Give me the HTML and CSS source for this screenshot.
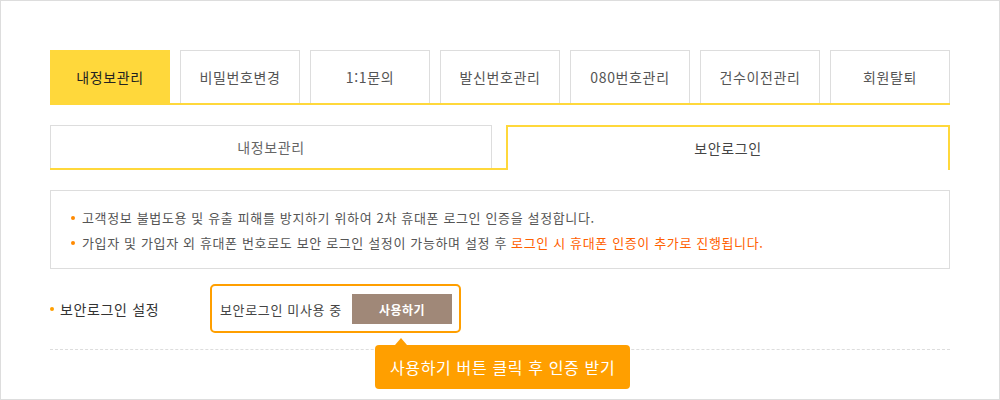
FILE: index.html
```html
<!DOCTYPE html>
<html lang="ko">

<head>
    <meta charset="UTF-8">
    <meta name="viewport" content="width=device-width, initial-scale=1.0">
    <title>보안로그인</title>
    <link rel="stylesheet" href="styles.css">
</head>

<body>
    <div class="page">
        <ul class="tabs">
            <li class="tab on">내정보관리</li>
            <li class="tab">비밀번호변경</li>
            <li class="tab">1:1문의</li>
            <li class="tab">발신번호관리</li>
            <li class="tab">080번호관리</li>
            <li class="tab">건수이전관리</li>
            <li class="tab">회원탈퇴</li>
        </ul>

        <ul class="sub-tabs">
            <li class="sub-tab">내정보관리</li>
            <li class="sub-tab on">보안로그인</li>
        </ul>

        <ul class="notice">
            <li>고객정보 불법도용 및 유출 피해를 방지하기 위하여 2차 휴대폰 로그인 인증을 설정합니다.</li>
            <li>가입자 및 가입자 외 휴대폰 번호로도 보안 로그인 설정이 가능하며 설정 후 <span class="point">로그인 시 휴대폰 인증이 추가로 진행됩니다.</span></li>
        </ul>

        <div class="setting">
            <div class="setting-label">보안로그인 설정</div>
            <div class="status">
                <span>보안로그인 미사용 중</span>
                <button class="btn-use">사용하기</button>
                <div class="tooltip">사용하기 버튼 클릭 후 인증 받기</div>
            </div>
        </div>
    </div>
</body>

</html>
```

FILE: styles.css
```css
* {
    box-sizing: border-box;
}

body {
    margin: 0;
    padding: 0;
    font-family: "Noto Sans CJK KR", "Noto Sans", sans-serif;
    letter-spacing: 0.04em;
    color: #555;
    background-color: #fff;
}

ul {
    list-style: none;
    margin: 0;
    padding: 0;
}

.page {
    width: 1000px;
    height: 400px;
    border: 1px solid #ddd;
    padding: 49px;
}

/* main tabs */
.tabs {
    display: flex;
    gap: 10px;
    border-bottom: 2px solid #ffd83b;
}

.tab {
    width: 120px;
    height: 53px;
    border: 1px solid #ddd;
    border-bottom: none;
    font-size: 14px;
    line-height: 52px;
    text-align: center;
    color: #555;
}

.tab.on {
    background-color: #ffd83b;
    border-color: #ffd83b;
    color: #222;
}

/* sub tabs */
.sub-tabs {
    display: flex;
    gap: 14px;
    margin-top: 20px;
    border-bottom: 2px solid #ffd83b;
}

.sub-tab {
    flex: 1;
    height: 43px;
    border: 1px solid #ddd;
    border-bottom: none;
    font-size: 14px;
    line-height: 42px;
    text-align: center;
    color: #666;
}

.sub-tab.on {
    height: 45px;
    margin-bottom: -2px;
    border: 2px solid #ffd83b;
    border-bottom: none;
    background-color: #fff;
    line-height: 42px;
    color: #444;
}

/* notice box */
.notice {
    margin-top: 20px;
    padding: 14px 20px 13px;
    border: 1px solid #ddd;
    font-size: 13px;
    line-height: 25px;
    color: #555;
}

.notice li {
    display: flex;
    align-items: center;
    white-space: nowrap;
}

.notice li::before {
    content: "";
    width: 4px;
    height: 4px;
    margin-right: 7px;
    border-radius: 50%;
    background-color: #ff8a00;
}

.notice .point {
    margin-left: 4px;
    color: #ff6000;
}

/* setting row */
.setting {
    display: flex;
    align-items: center;
    margin-top: 15px;
    padding-bottom: 16px;
    border-bottom: 1px dashed #ddd;
}

.setting-label {
    display: flex;
    align-items: center;
    width: 160px;
    font-size: 14px;
    color: #333;
}

.setting-label::before {
    content: "";
    width: 4px;
    height: 4px;
    margin-right: 6px;
    border-radius: 50%;
    background-color: #ff9f00;
}

.status {
    position: relative;
    display: flex;
    align-items: center;
    gap: 10px;
    padding: 8px 7px 7px 8px;
    border: 2px solid #ff9f00;
    border-radius: 5px;
    font-size: 13px;
    color: #444;
}

.btn-use {
    width: 100px;
    height: 30px;
    padding: 0;
    border: none;
    background-color: #a08878;
    color: #fff;
    font-family: inherit;
    font-size: 12px;
    font-weight: bold;
    letter-spacing: 0.04em;
    cursor: pointer;
}

.tooltip {
    position: absolute;
    left: 163px;
    top: 59px;
    padding: 0 15px;
    height: 44px;
    border-radius: 4px;
    background-color: #ff9f00;
    color: #fff;
    font-size: 16px;
    line-height: 44px;
    white-space: nowrap;
}

.tooltip::before {
    content: "";
    position: absolute;
    left: 20px;
    top: -7px;
    border-left: 6px solid transparent;
    border-right: 6px solid transparent;
    border-bottom: 7px solid #ff9f00;
}
```
